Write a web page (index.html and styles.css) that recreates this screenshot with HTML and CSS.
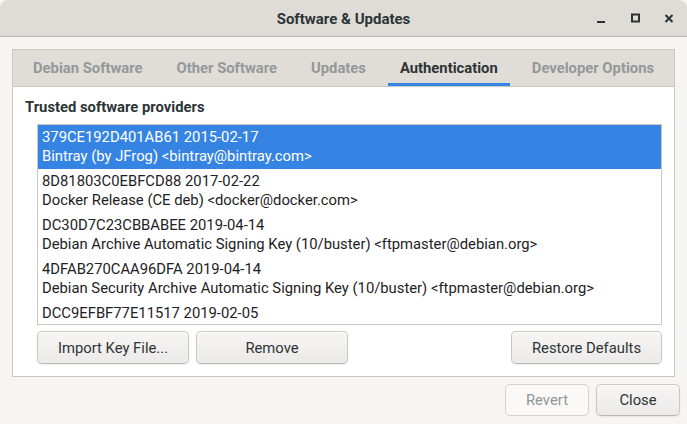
FILE: index.html
```html
<!DOCTYPE html>
<html>
<head>
<meta charset="utf-8">
<title>Software &amp; Updates</title>
<link rel="stylesheet" href="styles.css">
</head>
<body>
<div class="window">
  <header class="titlebar">
    <div class="tb-spacer"></div>
    <div class="tb-title">Software &amp; Updates</div>
    <div class="tb-controls">
      <span class="wc">
        <svg width="16" height="16" viewBox="0 0 16 16"><rect x="4" y="12" width="8" height="2" fill="#2e3436"/></svg>
      </span>
      <span class="wc">
        <svg width="16" height="16" viewBox="0 0 16 16"><rect x="5" y="5.5" width="7" height="7" fill="none" stroke="#2e3436" stroke-width="2"/></svg>
      </span>
      <span class="wc">
        <svg width="16" height="16" viewBox="0 0 16 16"><path d="M4.5 6 L11.5 13 M11.5 6 L4.5 13" stroke="#2e3436" stroke-width="2" fill="none"/></svg>
      </span>
    </div>
  </header>

  <main class="main">
    <section class="notebook">
      <nav class="tabs">
        <div class="tab">Debian Software</div>
        <div class="tab">Other Software</div>
        <div class="tab">Updates</div>
        <div class="tab active">Authentication</div>
        <div class="tab">Developer Options</div>
      </nav>
      <div class="page">
        <div class="heading">Trusted software providers</div>
        <div class="keylist">
          <div class="key selected">
            <div>379CE192D401AB61 2015-02-17</div>
            <div>Bintray (by JFrog) &lt;bintray@bintray.com&gt;</div>
          </div>
          <div class="key">
            <div>8D81803C0EBFCD88 2017-02-22</div>
            <div>Docker Release (CE deb) &lt;docker@docker.com&gt;</div>
          </div>
          <div class="key">
            <div>DC30D7C23CBBABEE 2019-04-14</div>
            <div>Debian Archive Automatic Signing Key (10/buster) &lt;ftpmaster@debian.org&gt;</div>
          </div>
          <div class="key">
            <div>4DFAB270CAA96DFA 2019-04-14</div>
            <div>Debian Security Archive Automatic Signing Key (10/buster) &lt;ftpmaster@debian.org&gt;</div>
          </div>
          <div class="key">
            <div>DCC9EFBF77E11517 2019-02-05</div>
          </div>
        </div>
        <div class="list-actions">
          <button class="btn wide">Import Key File...</button>
          <button class="btn wide">Remove</button>
          <div class="grow"></div>
          <button class="btn restore">Restore Defaults</button>
        </div>
      </div>
    </section>
  </main>

  <footer class="dialog-actions">
    <button class="btn action disabled">Revert</button>
    <button class="btn action">Close</button>
  </footer>
</div>
</body>
</html>
```
FILE: styles.css
```css
html, body {
  margin: 0;
  padding: 0;
  background: #f6f5f4;
}

body {
  font-family: Roboto, "Noto Sans", sans-serif;
  font-size: 14.8px;
  color: #2e3436;
}

.window {
  width: 687px;
  height: 424px;
  display: flex;
  flex-direction: column;
  background: #f6f5f4;
  overflow: hidden;
}

/* Title bar */
.titlebar {
  height: 36px;
  flex: none;
  display: grid;
  grid-template-columns: 1fr auto 1fr;
  align-items: center;
  background: #dfdcd8;
  border-bottom: 1px solid #bfb8b1;
  border-radius: 8px 8px 0 0;
}

.tb-title {
  font-weight: 700;
  font-size: 15px;
  color: #2e3436;
  padding-top: 1px;
}

.tb-controls {
  justify-self: end;
  display: flex;
  padding-right: 1px;
}

.wc {
  width: 34px;
  height: 36px;
  display: flex;
  align-items: center;
  justify-content: center;
}

.wc svg {
  display: block;
  margin-top: -2px;
}

/* Main area */
.main {
  padding: 12px 12px 0 12px;
  flex: none;
}

.notebook {
  border: 1px solid #cdc7c2;
  background: #ffffff;
}

.tabs {
  display: flex;
  gap: 10px;
  padding: 0 8px;
  height: 36px;
  background: #e0ddd9;
  border-bottom: 1px solid #cdc7c2;
}

.tab {
  padding: 0 12px;
  display: flex;
  align-items: center;
  font-weight: 700;
  color: #959898;
  white-space: nowrap;
}

.tab.active {
  color: #2e3436;
  box-shadow: inset 0 -3px 0 #3584e4;
}

.page {
  padding: 12px;
  display: flex;
  flex-direction: column;
}

.heading {
  font-weight: 700;
  line-height: 17px;
  margin-bottom: 8px;
  padding-top: 1px;
  margin-top: -1px;
}

.keylist {
  margin-left: 12px;
  height: 199px;
  border: 1px solid #cdc7c2;
  overflow: hidden;
  background: #ffffff;
}

.key {
  height: 44px;
  box-sizing: border-box;
  padding: 3px 4px;
  line-height: 19px;
  color: #1e2224;
  white-space: nowrap;
}

.key.selected {
  background: #3584e4;
  color: #ffffff;
}

.list-actions {
  display: flex;
  gap: 7px;
  margin-top: 6px;
  margin-left: 12px;
}

.grow {
  flex: 1;
}

/* Buttons */
.btn {
  font-family: inherit;
  font-size: 14.8px;
  line-height: 20px;
  color: #2e3436;
  height: 33px;
  padding: 0 10px;
  border: 1px solid #cdc7c2;
  border-bottom-color: #bfb8b1;
  border-radius: 5px;
  background: linear-gradient(to top, #edebe9 2px, #f6f5f4);
  box-shadow: inset 0 1px #ffffff, 0 1px 2px rgba(0, 0, 0, 0.07);
}

.btn.wide {
  width: 152px;
}

.btn.restore {
  width: 151px;
}

.dialog-actions {
  display: flex;
  justify-content: flex-end;
  gap: 7px;
  padding: 7px 7px 0 0;
}

.btn.action {
  width: 84px;
  height: 32px;
}

.btn.disabled {
  background: #faf9f8;
  border-color: #d5d0cc;
  color: #929595;
  box-shadow: none;
}
```
